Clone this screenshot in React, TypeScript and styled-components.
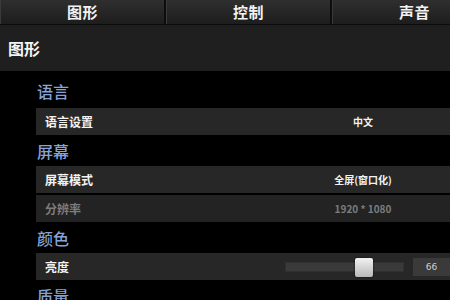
import React from 'react';
import styled, { createGlobalStyle, css } from 'styled-components';

const GlobalStyle = createGlobalStyle`
  html, body {
    margin: 0;
    padding: 0;
    background: #000;
    overflow: hidden;
  }
  body {
    font-family: "Noto Sans CJK SC", "Noto Sans", sans-serif;
  }
`;

const tabs = ['图形', '控制', '声音'];

const App = () => {
  const brightness = 66;
  return (
    <Page>
      <GlobalStyle />
      <TabBar>
        {tabs.map((t) => (
          <Tab key={t}>{t}</Tab>
        ))}
      </TabBar>
      <Header>图形</Header>
      <Content>
        <SectionTitle first>语言</SectionTitle>
        <Row>
          <Label>语言设置</Label>
          <Value>中文</Value>
        </Row>
        <SectionTitle>屏幕</SectionTitle>
        <Row>
          <Label>屏幕模式</Label>
          <Value>全屏(窗口化)</Value>
        </Row>
        <Row disabled>
          <Label>分辨率</Label>
          <Value>1920 * 1080</Value>
        </Row>
        <SectionTitle>颜色</SectionTitle>
        <Row>
          <Label>亮度</Label>
          <SliderCell>
            <Track>
              <Thumb style={{ left: `${(brightness / 100) * 105}px` }} />
            </Track>
            <NumberBox>{brightness}</NumberBox>
          </SliderCell>
        </Row>
        <SectionTitle>质量</SectionTitle>
      </Content>
    </Page>
  );
};

const Page = styled.div`
  width: 498px;
  height: 300px;
  overflow: hidden;
  background: #000;
`;

const TabBar = styled.div`
  display: grid;
  grid-template-columns: repeat(3, 166px);
  height: 24px;
  border-bottom: 1px solid #0c0c0c;
  background: #111;
`;

const Tab = styled.div`
  display: flex;
  align-items: center;
  justify-content: center;
  background: linear-gradient(to bottom, #2f2f2f, #1d1d1d);
  border-left: 1px solid #3a3a3a;
  border-right: 2px solid #0d0d0d;
  color: #f2f2f2;
  font-size: 15px;
  font-weight: 700;
  letter-spacing: 0.5px;
  padding-bottom: 2px;
  box-sizing: border-box;
`;

const Header = styled.div`
  height: 46px;
  display: flex;
  align-items: center;
  padding-left: 8px;
  background: #1f1f1f;
  color: #f4f4f4;
  font-size: 16px;
  font-weight: 700;
`;

const Content = styled.div`
  padding-left: 36px;
  display: flex;
  flex-direction: column;
`;

const SectionTitle = styled.div<{ first?: boolean }>`
  height: 31px;
  flex: none;
  display: flex;
  align-items: center;
  padding-left: 1px;
  color: #86a3d9;
  font-size: 16px;
  font-weight: 500;
  box-sizing: border-box;
  ${(p) =>
    p.first &&
    css`
      height: 37px;
      padding-top: 3px;
    `}
`;

const Row = styled.div<{ disabled?: boolean }>`
  height: 27px;
  flex: none;
  display: grid;
  grid-template-columns: 247px 160px 1fr;
  align-items: center;
  background: ${(p) => (p.disabled ? '#232323' : '#272727')};
  color: ${(p) => (p.disabled ? '#7c7c7c' : '#f2f2f2')};

  & + & {
    margin-top: 2px;
  }
`;

const Label = styled.div`
  padding-left: 9px;
  font-size: 12px;
  font-weight: 700;
`;

const Value = styled.div`
  text-align: center;
  font-size: 10px;
  font-weight: 700;
`;

const SliderCell = styled.div`
  display: flex;
  align-items: center;
  gap: 9px;
  margin-left: 2px;
  grid-column: 2 / 4;
`;

const Track = styled.div`
  position: relative;
  width: 119px;
  height: 10px;
  background: #3a3a3a;
  border: 1px solid #303030;
  box-sizing: border-box;
`;

const Thumb = styled.div`
  position: absolute;
  top: -5px;
  width: 18px;
  height: 19px;
  border-radius: 2px;
  background: linear-gradient(to bottom, #f2f2f2, #b8b8b8);
  box-shadow: 0 0 2px rgba(0, 0, 0, 0.8);
`;

const NumberBox = styled.div`
  width: 37px;
  height: 18px;
  display: flex;
  align-items: center;
  justify-content: center;
  background: #3a3a3a;
  color: #d0d0d0;
  font-size: 9px;
  font-family: "DejaVu Sans", sans-serif;
`;

export default App;
